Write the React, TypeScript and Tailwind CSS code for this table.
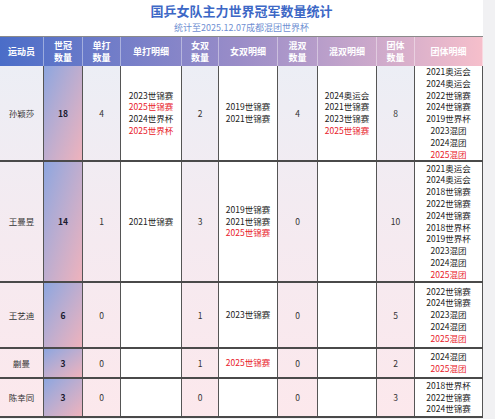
import React from "react"

type Line = { t: string; red?: boolean }
type Player = {
  name: string
  total: number
  singles: number
  singlesList: Line[]
  doubles: number
  doublesList: Line[]
  mixed: number
  mixedList: Line[]
  team: number
  teamList: Line[]
  h: string
}

const cols =
  "grid grid-cols-[44px_39px_38px_61px_37px_59px_40px_59px_38px_68px]"

const l = (t: string, red = false): Line => ({ t, red })

const players: Player[] = [
  {
    name: "孙颖莎",
    total: 18,
    singles: 4,
    singlesList: [l("2023世锦赛"), l("2025世锦赛", true), l("2024世界杯"), l("2025世界杯", true)],
    doubles: 2,
    doublesList: [l("2019世锦赛"), l("2021世锦赛")],
    mixed: 4,
    mixedList: [l("2024奥运会"), l("2021世锦赛"), l("2023世锦赛"), l("2025世锦赛", true)],
    team: 8,
    teamList: [
      l("2021奥运会"),
      l("2024奥运会"),
      l("2022世锦赛"),
      l("2024世锦赛"),
      l("2019世界杯"),
      l("2023混团"),
      l("2024混团"),
      l("2025混团", true)
    ],
    h: "h-[96px]"
  },
  {
    name: "王曼昱",
    total: 14,
    singles: 1,
    singlesList: [l("2021世锦赛")],
    doubles: 3,
    doublesList: [l("2019世锦赛"), l("2021世锦赛"), l("2025世锦赛", true)],
    mixed: 0,
    mixedList: [],
    team: 10,
    teamList: [
      l("2021奥运会"),
      l("2024奥运会"),
      l("2018世锦赛"),
      l("2022世锦赛"),
      l("2024世锦赛"),
      l("2018世界杯"),
      l("2019世界杯"),
      l("2023混团"),
      l("2024混团"),
      l("2025混团", true)
    ],
    h: "h-[121px]"
  },
  {
    name: "王艺迪",
    total: 6,
    singles: 0,
    singlesList: [],
    doubles: 1,
    doublesList: [l("2023世锦赛")],
    mixed: 0,
    mixedList: [],
    team: 5,
    teamList: [
      l("2022世锦赛"),
      l("2024世锦赛"),
      l("2023混团"),
      l("2024混团"),
      l("2025混团", true)
    ],
    h: "h-[66px]"
  },
  {
    name: "蒯曼",
    total: 3,
    singles: 0,
    singlesList: [],
    doubles: 1,
    doublesList: [l("2025世锦赛", true)],
    mixed: 0,
    mixedList: [],
    team: 2,
    teamList: [l("2024混团"), l("2025混团", true)],
    h: "h-[30px]"
  },
  {
    name: "陈幸同",
    total: 3,
    singles: 0,
    singlesList: [],
    doubles: 0,
    doublesList: [],
    mixed: 0,
    mixedList: [],
    team: 3,
    teamList: [l("2018世界杯"), l("2022世锦赛"), l("2024世锦赛")],
    h: "h-[39px]"
  }
]

const headers = [
  "运动员",
  "世冠\n数量",
  "单打\n数量",
  "单打明细",
  "女双\n数量",
  "女双明细",
  "混双\n数量",
  "混双明细",
  "团体\n数量",
  "团体明细"
]

function Count({ n, bold }: { n: number; bold?: boolean }) {
  return (
    <div
      className={
        "flex items-center justify-center border-r border-[#555] " +
        (bold
          ? "font-bold text-[#1a1a2e] bg-linear-to-br from-[#8da6df] to-[#eeb2bc]"
          : "text-[#333]")
      }
    >
      {n}
    </div>
  )
}

function Detail({ items }: { items: Line[] }) {
  return (
    <div className="flex flex-col items-center justify-center border-r border-[#555] bg-white leading-[11.8px]">
      {items.map((it, i) => (
        <span key={i} className={it.red ? "text-[#e8202a]" : "text-[#222]"}>
          {it.t}
        </span>
      ))}
    </div>
  )
}

export default function App() {
  return (
    <div
      className="w-[495px] h-[419px] bg-[#f1f1f3] overflow-hidden"
      style={{ fontFamily: '"Noto Sans CJK SC", "Noto Sans", sans-serif' }}
    >
      <div className="w-[483px] bg-white">
        {/* Title */}
        <div className="h-[36px] flex flex-col items-center pt-[3px]">
          <h1 className="text-[13px] leading-[16px] font-bold text-[#3d68c6]">
            国乒女队主力世界冠军数量统计
          </h1>
          <p className="mt-[3px] text-[9px] leading-[12px] text-[#6f8fd2]">
            统计至2025.12.07成都混团世界杯
          </p>
        </div>

        {/* Header */}
        <div
          className={
            cols +
            " h-[30px] border-t border-[#8a8a8a] bg-linear-to-r from-[#4a6dc8] via-[#9b8dc8] to-[#f6bfcb]"
          }
        >
          {headers.map((h) => (
            <div
              key={h}
              className="flex items-center justify-center border-r border-white/40 text-center text-[9px] leading-[12px] font-bold text-white whitespace-pre-line"
            >
              {h}
            </div>
          ))}
        </div>

        {/* Body */}
        <div className="bg-linear-to-b from-[#eceef5] via-[#f5eaf0] to-[#fce8ec] text-[8.5px]">
          {players.map((p) => (
            <div key={p.name} className={cols + " " + p.h + " border-b-2 border-[#4a4a4a]"}>
              <div className="flex items-center justify-center border-r border-[#555] text-[#333]">
                {p.name}
              </div>
              <Count n={p.total} bold />
              <Count n={p.singles} />
              <Detail items={p.singlesList} />
              <Count n={p.doubles} />
              <Detail items={p.doublesList} />
              <Count n={p.mixed} />
              <Detail items={p.mixedList} />
              <Count n={p.team} />
              <Detail items={p.teamList} />
            </div>
          ))}
        </div>
      </div>
    </div>
  )
}
